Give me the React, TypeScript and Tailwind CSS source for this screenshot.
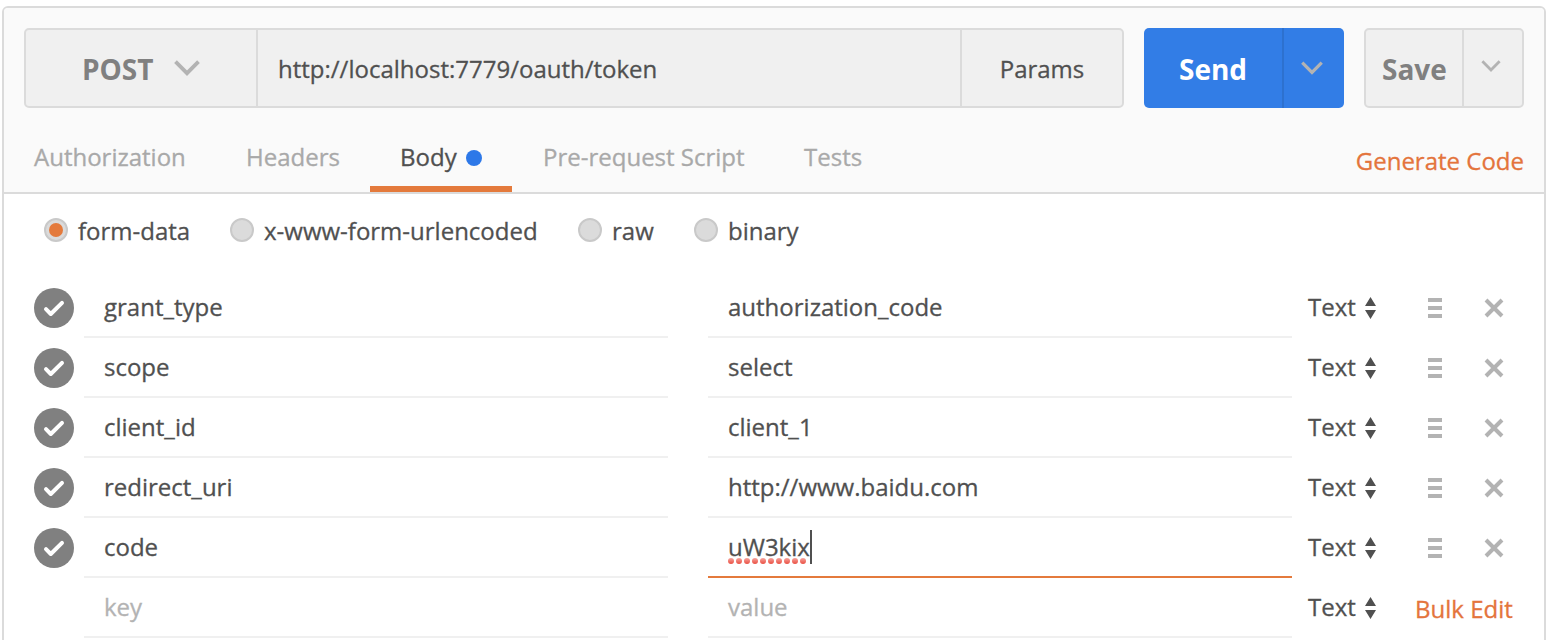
import React from "react";

type Row = { key: string; value: string; focused?: boolean; placeholder?: boolean };

const rows: Row[] = [
  { key: "grant_type", value: "authorization_code" },
  { key: "scope", value: "select" },
  { key: "client_id", value: "client_1" },
  { key: "redirect_uri", value: "http://www.baidu.com" },
  { key: "code", value: "uW3kix", focused: true },
  { key: "key", value: "value", placeholder: true },
];

const tabs = [
  { label: "Authorization", width: "w-[212px]" },
  { label: "Headers", width: "w-[154px]" },
  { label: "Body", width: "w-[143px]", active: true },
  { label: "Pre-request Script", width: "w-[261px]" },
  { label: "Tests", width: "w-[120px]" },
];

const modes = [
  { label: "form-data", width: "w-[186px]", checked: true },
  { label: "x-www-form-urlencoded", width: "w-[348px]" },
  { label: "raw", width: "w-[116px]" },
  { label: "binary", width: "w-[120px]" },
];

function Chevron({ className }: { className: string }) {
  return (
    <svg viewBox="0 0 26 16" className={className} fill="none" stroke="#b3b3b3" strokeWidth="3.8">
      <path d="M1.5 1.7 13 13.2 24.5 1.7" />
    </svg>
  );
}

function Check() {
  return (
    <svg viewBox="0 0 40 40" className="size-10 shrink-0">
      <circle cx="20" cy="20" r="20" fill="#808080" />
      <path d="M12 21.2 16.8 26 28 14.8" fill="none" stroke="#fff" strokeWidth="4" strokeLinecap="round" strokeLinejoin="round" />
    </svg>
  );
}

function Squiggle() {
  return (
    <svg viewBox="0 0 80 6" className="absolute top-[40px] left-5 h-1.5 w-20">
      <defs>
        <linearGradient id="dot" x1="0" y1="0" x2="0" y2="1">
          <stop offset="0" stopColor="#f6a59e" />
          <stop offset="1" stopColor="#ea4e41" />
        </linearGradient>
      </defs>
      {Array.from({ length: 10 }, (_, i) => (
        <circle key={i} cx={3 + i * 8} cy="3" r="3" fill="url(#dot)" />
      ))}
    </svg>
  );
}

function TypeSelect() {
  return (
    <div className="ml-4 flex h-[58px] w-[107px] shrink-0 items-center">
      <span className="w-[57px] pb-0.5">Text</span>
      <svg viewBox="0 0 11 22" className="mt-0.5 h-[22px] w-[11px]" fill="#505050">
        <path d="M5.5 0 11 9H0zM5.5 22 11 13H0z" />
      </svg>
    </div>
  );
}

function DataRow({ row }: { row: Row }) {
  const tone = row.placeholder ? "text-[#b3b3b3]" : "text-[#505050]";
  return (
    <div className="flex h-[60px] shrink-0 pl-[30px]">
      <div className="mt-2.5 mr-2.5 h-10 w-10 shrink-0">{!row.placeholder && <Check />}</div>
      <div className={`flex w-[584px] shrink-0 items-center border-b-2 border-[#f0f0f0] pb-0.5 pl-5 ${tone}`}>{row.key}</div>
      <div
        className={`relative ml-10 flex w-[584px] shrink-0 items-center border-b-2 pb-0.5 pl-5 ${tone} ${
          row.focused ? "border-[#e47a3c]" : "border-[#f0f0f0]"
        }`}
      >
        {row.value}
        {row.focused && (
          <>
            <Squiggle />
            <span className="absolute top-3 left-[102px] h-[34px] w-0.5 bg-[#505050]" />
          </>
        )}
      </div>
      <TypeSelect />
      {row.placeholder ? (
        <div className="flex h-[60px] items-center text-[#e4743c]">Bulk Edit</div>
      ) : (
        <div className="flex h-[60px] items-center pl-[13px]">
          <div className="flex w-3.5 flex-col gap-1">
            <i className="h-1 bg-[#b3b3b3]" />
            <i className="h-1 bg-[#b3b3b3]" />
            <i className="h-1 bg-[#b3b3b3]" />
          </div>
          <svg viewBox="0 0 20 20" className="ml-[42px] size-5" stroke="#b3b3b3" strokeWidth="4">
            <path d="M2 2 18 18M18 2 2 18" />
          </svg>
        </div>
      )}
    </div>
  );
}

export default function App() {
  return (
    <div className="h-[640px] w-[1560px] overflow-hidden bg-white pt-1.5 pl-0.5 font-['Open_Sans',sans-serif] text-[24px] leading-[33px] whitespace-nowrap text-[#505050] [-webkit-text-stroke:0.3px]">
      <div className="flex h-[660px] w-[1544px] flex-col overflow-hidden rounded-md border-2 border-[#dbdbdb] bg-white">
        <header className="flex h-[186px] shrink-0 flex-col border-b-2 border-[#dbdbdb] bg-[#fafafa]">
          <div className="flex h-[100px] shrink-0 gap-5 pt-5 pl-5">
            <div className="flex h-20 w-[1100px] rounded-[5px] border-2 border-[#dbdbdb] bg-[#f0f0f0]">
              <div className="flex w-[232px] items-center border-r-2 border-[#dbdbdb] pl-14">
                <span className="w-[92px] pt-0.5 text-[28px] leading-[38px] font-bold text-[#808080] [-webkit-text-stroke:0]">
                  POST
                </span>
                <Chevron className="h-4 w-[26px]" />
              </div>
              <div className="flex w-[704px] items-center border-r-2 border-[#dbdbdb] pl-5">
                http://localhost:7779/oauth/token
              </div>
              <div className="flex flex-1 items-center justify-center">Params</div>
            </div>
            <div className="flex h-20 w-[200px] overflow-hidden rounded-[5px] bg-[#327de6]">
              <div className="flex w-[140px] items-center border-r-2 border-[#2d71cf] pt-0.5 pl-[35px] text-[28px] leading-[38px] font-bold text-white [-webkit-text-stroke:0]">
                Send
              </div>
              <div className="flex flex-1 items-center justify-center pr-1">
                <Chevron className="h-[14px] w-[22px]" />
              </div>
            </div>
            <div className="flex h-20 w-40 rounded-[5px] border-2 border-[#dbdbdb] bg-[#f0f0f0]">
              <div className="flex w-[98px] items-center border-r-2 border-[#dbdbdb] pt-0.5 pl-4 text-[28px] leading-[38px] font-bold text-[#808080] [-webkit-text-stroke:0]">
                Save
              </div>
              <div className="flex flex-1 items-center justify-center pr-1 pb-1">
                <Chevron className="h-3 w-5" />
              </div>
            </div>
          </div>
          <div className="flex flex-1">
            {tabs.map((t) => (
              <div key={t.label} className={`flex shrink-0 ${t.width}`}>
                <div
                  className={`flex items-center pl-[30px] ${
                    t.active
                      ? "w-[142px] border-b-6 border-[#e47a3c] pt-[22px] pb-[3px] text-[#505050]"
                      : "pt-[22px] pb-[9px] text-[#a9a9a9]"
                  }`}
                >
                  {t.label}
                  {t.active && <span className="mt-0.5 ml-[9px] size-4 rounded-full bg-[#2d78e8]" />}
                </div>
              </div>
            ))}
            <div className="ml-auto flex items-center pt-[30px] pr-5 pb-[9px] text-[#e4743c]">Generate Code</div>
          </div>
        </header>
        <div className="flex h-[84px] shrink-0 pl-10">
          {modes.map((m) => (
            <div key={m.label} className={`flex h-[72px] shrink-0 items-center ${m.width}`}>
              <span className="mr-2.5 flex size-6 shrink-0 items-center justify-center rounded-full border-2 border-[#c9c9c9] bg-[#dbdbdb]">
                {m.checked && <span className="size-3.5 rounded-full bg-[#e47a3c]" />}
              </span>
              {m.label}
            </div>
          ))}
        </div>
        {rows.map((r) => (
          <DataRow key={r.key} row={r} />
        ))}
      </div>
    </div>
  );
}
